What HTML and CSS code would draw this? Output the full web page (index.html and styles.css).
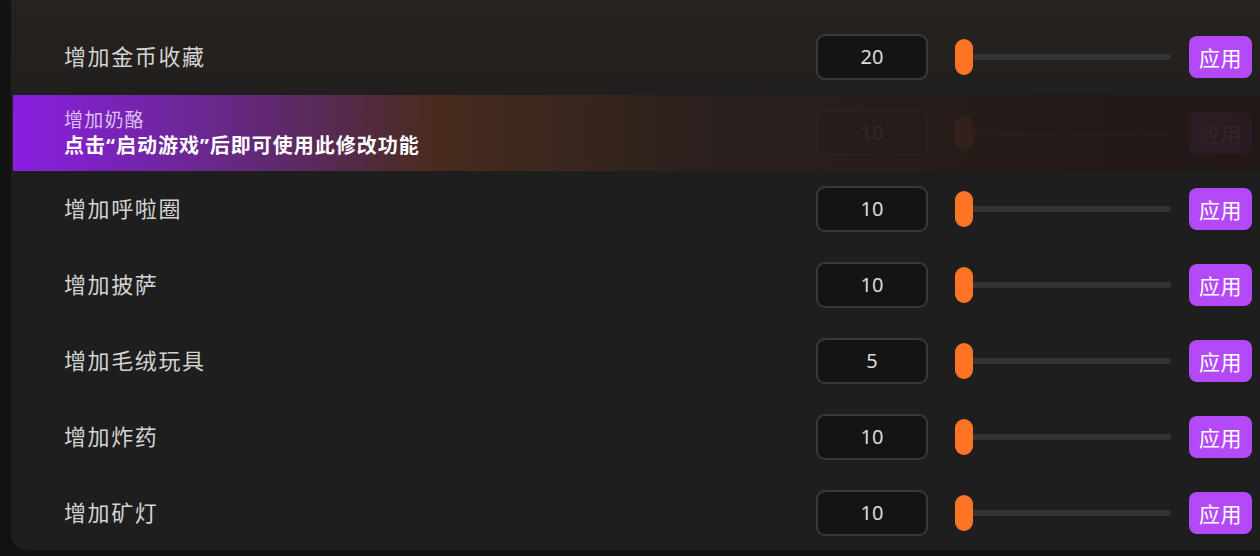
FILE: index.html
```html
<!DOCTYPE html>
<html>

<head>
  <meta charset="utf-8">
  <link rel="stylesheet" href="styles.css">
</head>

<body>

  <div class="panel">

    <div class="row">
      <div class="label">增加金币收藏</div>
      <div class="num">20</div>
      <div class="slider"><span class="thumb"></span><span class="track"></span></div>
      <button class="apply">应用</button>
    </div>

    <!-- 未启动游戏时被遮住的一行 -->
    <div class="row locked">
      <div class="label"></div>
      <div class="num">10</div>
      <div class="slider"><span class="thumb"></span><span class="track"></span></div>
      <button class="apply">应用</button>
      <div class="lockTip">
        <div class="tipName">增加奶酪</div>
        <div class="tipText">点击“启动游戏”后即可使用此修改功能</div>
      </div>
    </div>

    <div class="row">
      <div class="label">增加呼啦圈</div>
      <div class="num">10</div>
      <div class="slider"><span class="thumb"></span><span class="track"></span></div>
      <button class="apply">应用</button>
    </div>

    <div class="row">
      <div class="label">增加披萨</div>
      <div class="num">10</div>
      <div class="slider"><span class="thumb"></span><span class="track"></span></div>
      <button class="apply">应用</button>
    </div>

    <div class="row">
      <div class="label">增加毛绒玩具</div>
      <div class="num">5</div>
      <div class="slider"><span class="thumb"></span><span class="track"></span></div>
      <button class="apply">应用</button>
    </div>

    <div class="row">
      <div class="label">增加炸药</div>
      <div class="num">10</div>
      <div class="slider"><span class="thumb"></span><span class="track"></span></div>
      <button class="apply">应用</button>
    </div>

    <div class="row">
      <div class="label">增加矿灯</div>
      <div class="num">10</div>
      <div class="slider"><span class="thumb"></span><span class="track"></span></div>
      <button class="apply">应用</button>
    </div>

  </div>

</body>

</html>
```

FILE: styles.css
```css
body {
  margin: 0;
  background-color: #121212;
  font-family: "Noto Sans", "Noto Sans CJK SC", sans-serif;
  overflow: hidden;
}

.panel {
  margin-left: 11px;
  height: 550px;
  padding-top: 19px;
  box-sizing: border-box;
  background: linear-gradient(180deg, #27221f 0px, #1f1e1d 130px, #1e1e1e 200px);
  border-bottom-left-radius: 16px;
  overflow: hidden;
}

.row {
  position: relative;
  display: flex;
  align-items: center;
  height: 76px;
  padding-left: 53px;
}

.label {
  flex: 1;
  font-size: 22px;
  letter-spacing: 1.6px;
  color: #d4d4d4;
  margin-top: -4px;
}

.num {
  width: 108px;
  height: 42px;
  line-height: 42px;
  border: 2px solid #3a3a3a;
  border-radius: 9px;
  background-color: #141414;
  color: #dcdcdc;
  font-size: 20px;
  text-align: center;
}

.slider {
  display: flex;
  align-items: center;
  width: 216px;
  margin-left: 27px;
}

.thumb {
  width: 18px;
  height: 36px;
  border-radius: 9px;
  background-color: #ff7424;
}

.track {
  flex: 1;
  height: 6px;
  border-radius: 0 3px 3px 0;
  background-color: #343434;
}

.apply {
  width: 63px;
  height: 42px;
  margin-left: 18px;
  margin-right: 8px;
  border: none;
  border-radius: 8px;
  background-color: #b44af7;
  color: #ffffff;
  font-family: inherit;
  font-size: 21px;
  letter-spacing: 0.5px;
  padding: 0;
}

.lockTip {
  position: absolute;
  left: 2px;
  top: 0;
  right: 0;
  bottom: 0;
  padding-left: 51px;
  display: flex;
  flex-direction: column;
  justify-content: center;
  background: linear-gradient(90deg, rgba(138, 30, 226, 1) 0px, rgba(104, 40, 140, 1) 200px, rgba(74, 44, 30, 0.97) 420px, rgba(42, 32, 29, 0.95) 700px, rgba(33, 24, 22, 0.94) 100%);
}

.tipName {
  font-size: 19px;
  line-height: 26px;
  letter-spacing: 1.2px;
  color: #dcbef2;
}

.tipText {
  font-size: 20px;
  line-height: 26px;
  letter-spacing: 1px;
  font-weight: bold;
  color: #ffffff;
}
```
